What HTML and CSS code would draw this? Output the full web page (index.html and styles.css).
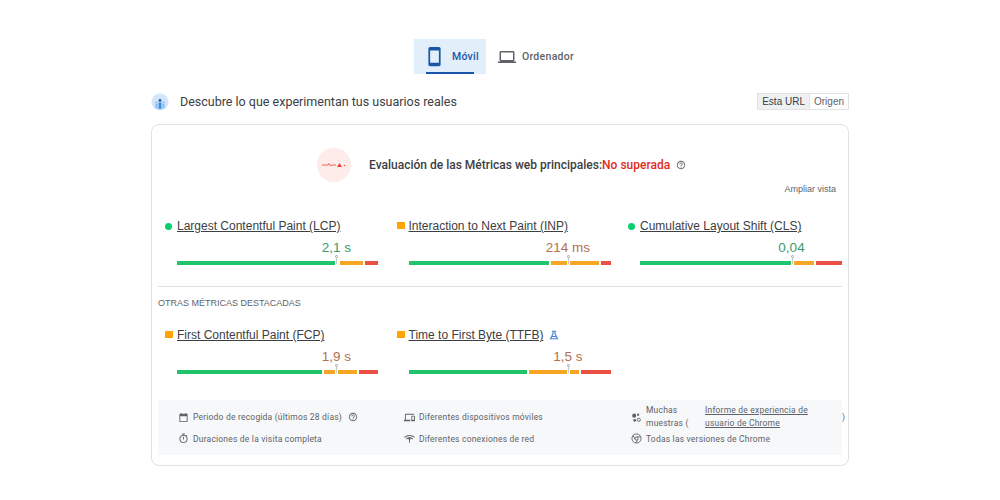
FILE: index.html
```html
<!DOCTYPE html>
<html lang="es">
  <head>
    <meta charset="UTF-8" />
    <title>Métricas web principales</title>
    <link rel="stylesheet" href="styles.css">
  </head>
  <body>
    <div class="report">
      <div class="tabs">
        <div class="tab tab-active">
          <svg class="tab-phone" viewBox="0 0 24 24"><path d="M17 1.01L7 1c-1.1 0-2 .9-2 2v18c0 1.1.9 2 2 2h10c1.1 0 2-.9 2-2V3c0-1.1-.9-1.99-2-1.99zM17 19H7V5h10v14z"/></svg>
          <span>Móvil</span>
        </div>
        <div class="tab">
          <svg class="tab-laptop" viewBox="0 0 24 24"><path d="M20 18c1.1 0 2-.9 2-2V6c0-1.1-.9-2-2-2H4c-1.1 0-2 .9-2 2v10c0 1.1.9 2 2 2H0v2h24v-2h-4zM4 6h16v10H4V6z"/></svg>
          <span>Ordenador</span>
        </div>
      </div>

      <div class="section-head">
        <div class="section-title">
          <svg class="users-icon" viewBox="0 0 18 18">
            <circle cx="9" cy="9" r="8.5" fill="#d3e5fa"/>
            <circle cx="9" cy="7.5" r="1.4" fill="#1a5fb4"/>
            <circle cx="5.5" cy="9.5" r="1" fill="#6fb0ea"/>
            <circle cx="12.5" cy="9.5" r="1" fill="#6fb0ea"/>
            <rect x="7.5" y="9.5" width="3" height="6.5" fill="#3f8fde"/>
            <rect x="4.5" y="11" width="2" height="4.5" fill="#7fbaf0"/>
            <rect x="11.5" y="11" width="2" height="4.5" fill="#7fbaf0"/>
          </svg>
          <span>Descubre lo que experimentan tus usuarios reales</span>
        </div>
        <div class="toggle">
          <span class="toggle-item toggle-active">Esta URL</span>
          <span class="toggle-item">Origen</span>
        </div>
      </div>

      <div class="card">
        <div class="verdict">
          <div class="verdict-badge">
            <svg viewBox="0 0 24 10" class="verdict-icon">
              <path d="M0 5h6l1-1.5L8.500 6 10 5h4" fill="none" stroke="#ea4335" stroke-width="0.8"/>
              <path d="M15 7l2.500-4L20 7z" fill="#ea4335"/>
              <circle cx="22.500" cy="5.500" r="0.7" fill="#ea4335"/>
            </svg>
          </div>
          <div class="verdict-text">Evaluación de las Métricas web principales:<span class="verdict-fail">No superada</span></div>
          <svg class="help-icon" viewBox="0 0 24 24"><path d="M11 18h2v-2h-2v2zm1-16C6.480 2 2 6.480 2 12s4.480 10 10 10 10-4.480 10-10S17.520 2 12 2zm0 18c-4.410 0-8-3.590-8-8s3.590-8 8-8 8 3.590 8 8-3.590 8-8 8zm0-14c-2.210 0-4 1.790-4 4h2c0-1.100.9-2 2-2s2 .9 2 2c0 2-3 1.750-3 5h2c0-2.250 3-2.500 3-5 0-2.210-1.790-4-4-4z"/></svg>
        </div>
        <div class="expand">Ampliar vista</div>

        <div class="metrics">
          <div class="metric">
            <div class="metric-head"><span class="dot"></span><a class="metric-name">Largest Contentful Paint (LCP)</a></div>
            <div class="metric-value good">2,1 s</div>
            <div class="bar">
              <span class="seg green" style="width:161px"></span>
              <span class="seg orange" style="width:23px"></span>
              <span class="seg red" style="width:13px"></span>
              <span class="pin"></span>
            </div>
          </div>
          <div class="metric">
            <div class="metric-head"><span class="square"></span><a class="metric-name">Interaction to Next Paint (INP)</a></div>
            <div class="metric-value warn">214 ms</div>
            <div class="bar">
              <span class="seg green" style="width:140px"></span>
              <span class="seg orange" style="width:48px"></span>
              <span class="seg red" style="width:10px"></span>
              <span class="pin"></span>
            </div>
          </div>
          <div class="metric">
            <div class="metric-head"><span class="dot"></span><a class="metric-name">Cumulative Layout Shift (CLS)</a></div>
            <div class="metric-value good">0,04</div>
            <div class="bar">
              <span class="seg green" style="width:152px"></span>
              <span class="seg orange" style="width:20px"></span>
              <span class="seg red" style="width:26px"></span>
              <span class="pin"></span>
            </div>
          </div>
        </div>

        <div class="other-title">OTRAS MÉTRICAS DESTACADAS</div>

        <div class="metrics">
          <div class="metric">
            <div class="metric-head"><span class="square"></span><a class="metric-name">First Contentful Paint (FCP)</a></div>
            <div class="metric-value warn">1,9 s</div>
            <div class="bar">
              <span class="seg green" style="width:145px"></span>
              <span class="seg orange" style="width:33px"></span>
              <span class="seg red" style="width:19px"></span>
              <span class="pin"></span>
            </div>
          </div>
          <div class="metric">
            <div class="metric-head">
              <span class="square"></span><a class="metric-name">Time to First Byte (TTFB)</a>
              <svg class="flask-icon" viewBox="0 0 12 12"><path d="M3.500 1.500h5M4.800 1.500v3L1.800 10.500h8.400L7.200 4.500v-3M3.500 7.800h5" fill="none" stroke="#4a80d8" stroke-width="1.300"/></svg>
            </div>
            <div class="metric-value warn">1,5 s</div>
            <div class="bar">
              <span class="seg green" style="width:118px"></span>
              <span class="seg orange" style="width:50px"></span>
              <span class="seg red" style="width:30px"></span>
              <span class="pin"></span>
            </div>
          </div>
        </div>

        <div class="notes">
          <div class="note">
            <svg viewBox="0 0 24 24"><path d="M19 4h-1V2h-2v2H8V2H6v2H5c-1.100 0-2 .9-2 2v14c0 1.100.9 2 2 2h14c1.100 0 2-.9 2-2V6c0-1.100-.9-2-2-2zm0 16H5V9h14v11z"/></svg>
            <span>Periodo de recogida (últimos 28 días)</span>
            <svg class="note-help" viewBox="0 0 24 24"><path d="M11 18h2v-2h-2v2zm1-16C6.480 2 2 6.480 2 12s4.480 10 10 10 10-4.480 10-10S17.520 2 12 2zm0 18c-4.410 0-8-3.590-8-8s3.590-8 8-8 8 3.590 8 8-3.590 8-8 8zm0-14c-2.210 0-4 1.790-4 4h2c0-1.100.9-2 2-2s2 .9 2 2c0 2-3 1.750-3 5h2c0-2.250 3-2.500 3-5 0-2.210-1.790-4-4-4z"/></svg>
          </div>
          <div class="note">
            <svg viewBox="0 0 24 24"><path d="M4 6h18V4H4c-1.100 0-2 .9-2 2v11H0v3h14v-3H4V6zm19 2h-6c-.55 0-1 .45-1 1v10c0 .55.45 1 1 1h6c.55 0 1-.45 1-1V9c0-.55-.45-1-1-1zm-1 9h-4v-7h4v7z"/></svg>
            <span>Diferentes dispositivos móviles</span>
          </div>
          <div class="note">
            <svg viewBox="0 0 24 24"><circle cx="7" cy="8" r="4.500"/><circle cx="15.500" cy="6" r="2.500"/><circle cx="17" cy="17" r="3.500" fill="none" stroke="#5f6368" stroke-width="2"/><circle cx="8" cy="18" r="3"/></svg>
            <span class="note-samples">Muchas muestras (</span>
            <a class="note-link">Informe de experiencia de usuario de Chrome</a>
            <span class="note-close">)</span>
          </div>
          <div class="note">
            <svg viewBox="0 0 24 24"><path d="M9 1h6v2H9zM19.030 7.390l1.420-1.420c-.43-.51-.9-.99-1.410-1.410l-1.420 1.420C16.070 4.740 14.120 4 12 4c-4.970 0-9 4.030-9 9s4.030 9 9 9 9-4.030 9-9c0-2.120-.74-4.070-1.970-5.610zM12 20c-3.870 0-7-3.130-7-7s3.130-7 7-7 7 3.130 7 7-3.130 7-7 7zM11 8h2v6h-2z"/></svg>
            <span>Duraciones de la visita completa</span>
          </div>
          <div class="note">
            <svg viewBox="0 0 24 24"><path d="M1 9.500C7 4 17 4 23 9.500M5 13c4-3.500 10-3.500 14 0" fill="none" stroke="#5f6368" stroke-width="2.500"/><circle cx="12" cy="13" r="2.500"/><path d="M11 14h2v7h-2z"/></svg>
            <span>Diferentes conexiones de red</span>
          </div>
          <div class="note">
            <svg viewBox="0 0 24 24"><g fill="none" stroke="#5f6368" stroke-width="2"><circle cx="12" cy="12" r="10"/><circle cx="12" cy="12" r="3.500"/><path d="M12 8.500h9.500M9 13.800L4 5M15 13.800L10.500 21.800"/></g></svg>
            <span>Todas las versiones de Chrome</span>
          </div>
        </div>
      </div>
    </div>
  </body>
</html>
```

FILE: styles.css
```css
body {
  margin: 0;
  font-family: Roboto, sans-serif;
  color: #3c4043;
  background: #fff;
}
.report {
  width: 698px;
  margin: 0 auto;
}
a {
  color: inherit;
  text-decoration: underline;
}

/* tabs */
.tabs {
  display: flex;
  justify-content: center;
  height: 35px;
  margin-top: 39px;
  padding-top: 39px;
  box-sizing: content-box;
  margin-top: 0;
}
.tab {
  display: flex;
  align-items: center;
  gap: 6px;
  padding: 0 12px;
  font-size: 10.5px;
  font-weight: 500;
  letter-spacing: 0.3px;
  color: #5f6368;
  position: relative;
}
.tab svg {
  fill: #5f6368;
}
.tab-active {
  width: 72px;
  box-sizing: border-box;
  gap: 7px;
  padding: 0 0 0 10px;
  background: #e3eefb;
  color: #1a56a8;
}
.tab-active::after {
  content: "";
  position: absolute;
  left: 12px;
  right: 12px;
  bottom: 0;
  height: 2px;
  background: #1a56a8;
}
.tab-active svg {
  fill: #1a56a8;
}
.tab-phone {
  width: 21px;
  height: 21px;
}
.tab-laptop {
  width: 18px;
  height: 18px;
}

/* heading row */
.section-head {
  display: flex;
  justify-content: space-between;
  align-items: center;
  margin-top: 19px;
  height: 17px;
}
.section-title {
  display: flex;
  align-items: center;
  gap: 11px;
  font-size: 12.5px;
  font-weight: 400;
  color: #3c4043;
}
.users-icon {
  width: 18px;
  height: 18px;
}
.toggle {
  display: flex;
  border: 1px solid #dfe1e5;
  font-family: "Liberation Sans", Arial, sans-serif;
  font-size: 10px;
}
.toggle-item {
  padding: 0 4px;
  line-height: 15px;
  color: #5f6368;
}
.toggle-active {
  background: #eef0f2;
  border-right: 1px solid #dfe1e5;
  color: #3c4043;
}

/* card */
.card {
  margin-top: 14px;
  height: 342px;
  box-sizing: border-box;
  padding: 23px 6px 0;
  border: 1px solid #dfe1e5;
  border-radius: 8px;
}
.verdict {
  display: flex;
  align-items: center;
  padding-left: 159px;
  height: 34px;
}
.verdict-badge {
  display: flex;
  align-items: center;
  justify-content: center;
  width: 34px;
  height: 34px;
  border-radius: 50%;
  background: #fdecea;
}
.verdict-icon {
  width: 24px;
  height: 10px;
}
.verdict-text {
  margin-left: 18px;
  font-size: 12px;
  font-weight: 500;
  color: #3c4043;
}
.verdict-fail {
  color: #e02b20;
}
.help-icon {
  width: 10px;
  height: 10px;
  margin-left: 6px;
  fill: #5f6368;
}
.expand {
  margin-top: 1px;
  padding-right: 6px;
  text-align: right;
  font-family: "Liberation Sans", Arial, sans-serif;
  font-size: 9px;
  line-height: 12px;
  color: #5f6368;
  margin-top: 1px;
}

/* metrics */
.metrics {
  display: grid;
  grid-template-columns: 231.5px 231.5px 221px;
  margin-top: 23px;
}
.metric-head {
  display: flex;
  align-items: center;
  height: 16px;
  padding-left: 7px;
  font-family: "Liberation Sans", Arial, sans-serif;
  font-size: 12px;
  color: #3c4043;
}
.metric-name {
  margin-left: 4px;
}
.dot {
  width: 7px;
  height: 7px;
  border-radius: 50%;
  background: #0cce6b;
  margin-right: 1px;
}
.square {
  width: 8px;
  height: 7px;
  background: #ffa400;
  margin-top: -2px;
}
.flask-icon {
  width: 10px;
  height: 10px;
  margin-left: 6px;
}
.metric-value {
  margin-top: 6px;
  margin-left: calc(19px + (100% - 19px) / 2);
  width: calc((100% - 19px) / 2);
  text-align: center;
  font-family: "Liberation Sans", Arial, sans-serif;
  font-size: 13.5px;
  line-height: 15px;
}
.good {
  color: #3c9a6c;
}
.warn {
  color: #b1704e;
}
.bar {
  position: relative;
  display: flex;
  gap: 2px;
  margin: 6px 0 0 19px;
  height: 4px;
}
.seg {
  display: block;
  height: 4px;
}
.green {
  background: #1fc46b;
}
.orange {
  background: #f5a623;
}
.red {
  background: #ec5044;
}
.pin {
  position: absolute;
  left: 75%;
  top: -6px;
  width: 3px;
  height: 10px;
  margin-left: -1px;
  background: linear-gradient(#fff, #fff) center / 3px 5px no-repeat;
  background-position: bottom;
}
.pin::before {
  content: "";
  position: absolute;
  left: 0;
  top: 0;
  width: 3px;
  height: 3px;
  box-sizing: border-box;
  border: 1px solid #9aa0a6;
  border-radius: 50%;
}
.pin::after {
  content: "";
  position: absolute;
  left: 1px;
  top: 3px;
  width: 1px;
  height: 6px;
  background: #c4c7ca;
}
.other-title {
  margin-top: 21px;
  padding-top: 11px;
  border-top: 1px solid #e0e0e0;
  font-family: "Liberation Sans", Arial, sans-serif;
  font-size: 9px;
  line-height: 11px;
  color: #5f6368;
}
.other-title + .metrics {
  margin-top: 18px;
}

/* footer notes */
.notes {
  display: grid;
  grid-template-columns: 226px 227px 1fr;
  grid-template-rows: 26px 15px;
  row-gap: 1px;
  align-items: center;
  margin-top: 26px;
  padding: 4px 0 10px 20px;
  height: 55px;
  box-sizing: border-box;
  background: #f6f8fa;
  font-size: 8.5px;
  letter-spacing: 0.2px;
  color: #5f6368;
}
.note {
  display: flex;
  align-items: center;
  gap: 4px;
}
.note > svg {
  flex: none;
  width: 11px;
  height: 11px;
  fill: #5f6368;
}
.note > svg.note-help {
  width: 10px;
  height: 10px;
  margin-left: 2px;
}
.note-samples {
  width: 55px;
  flex: none;
  line-height: 13px;
}
.note-link {
  width: 133px;
  flex: none;
  line-height: 13px;
  padding-right: 20px;
  box-sizing: border-box;
}
```
